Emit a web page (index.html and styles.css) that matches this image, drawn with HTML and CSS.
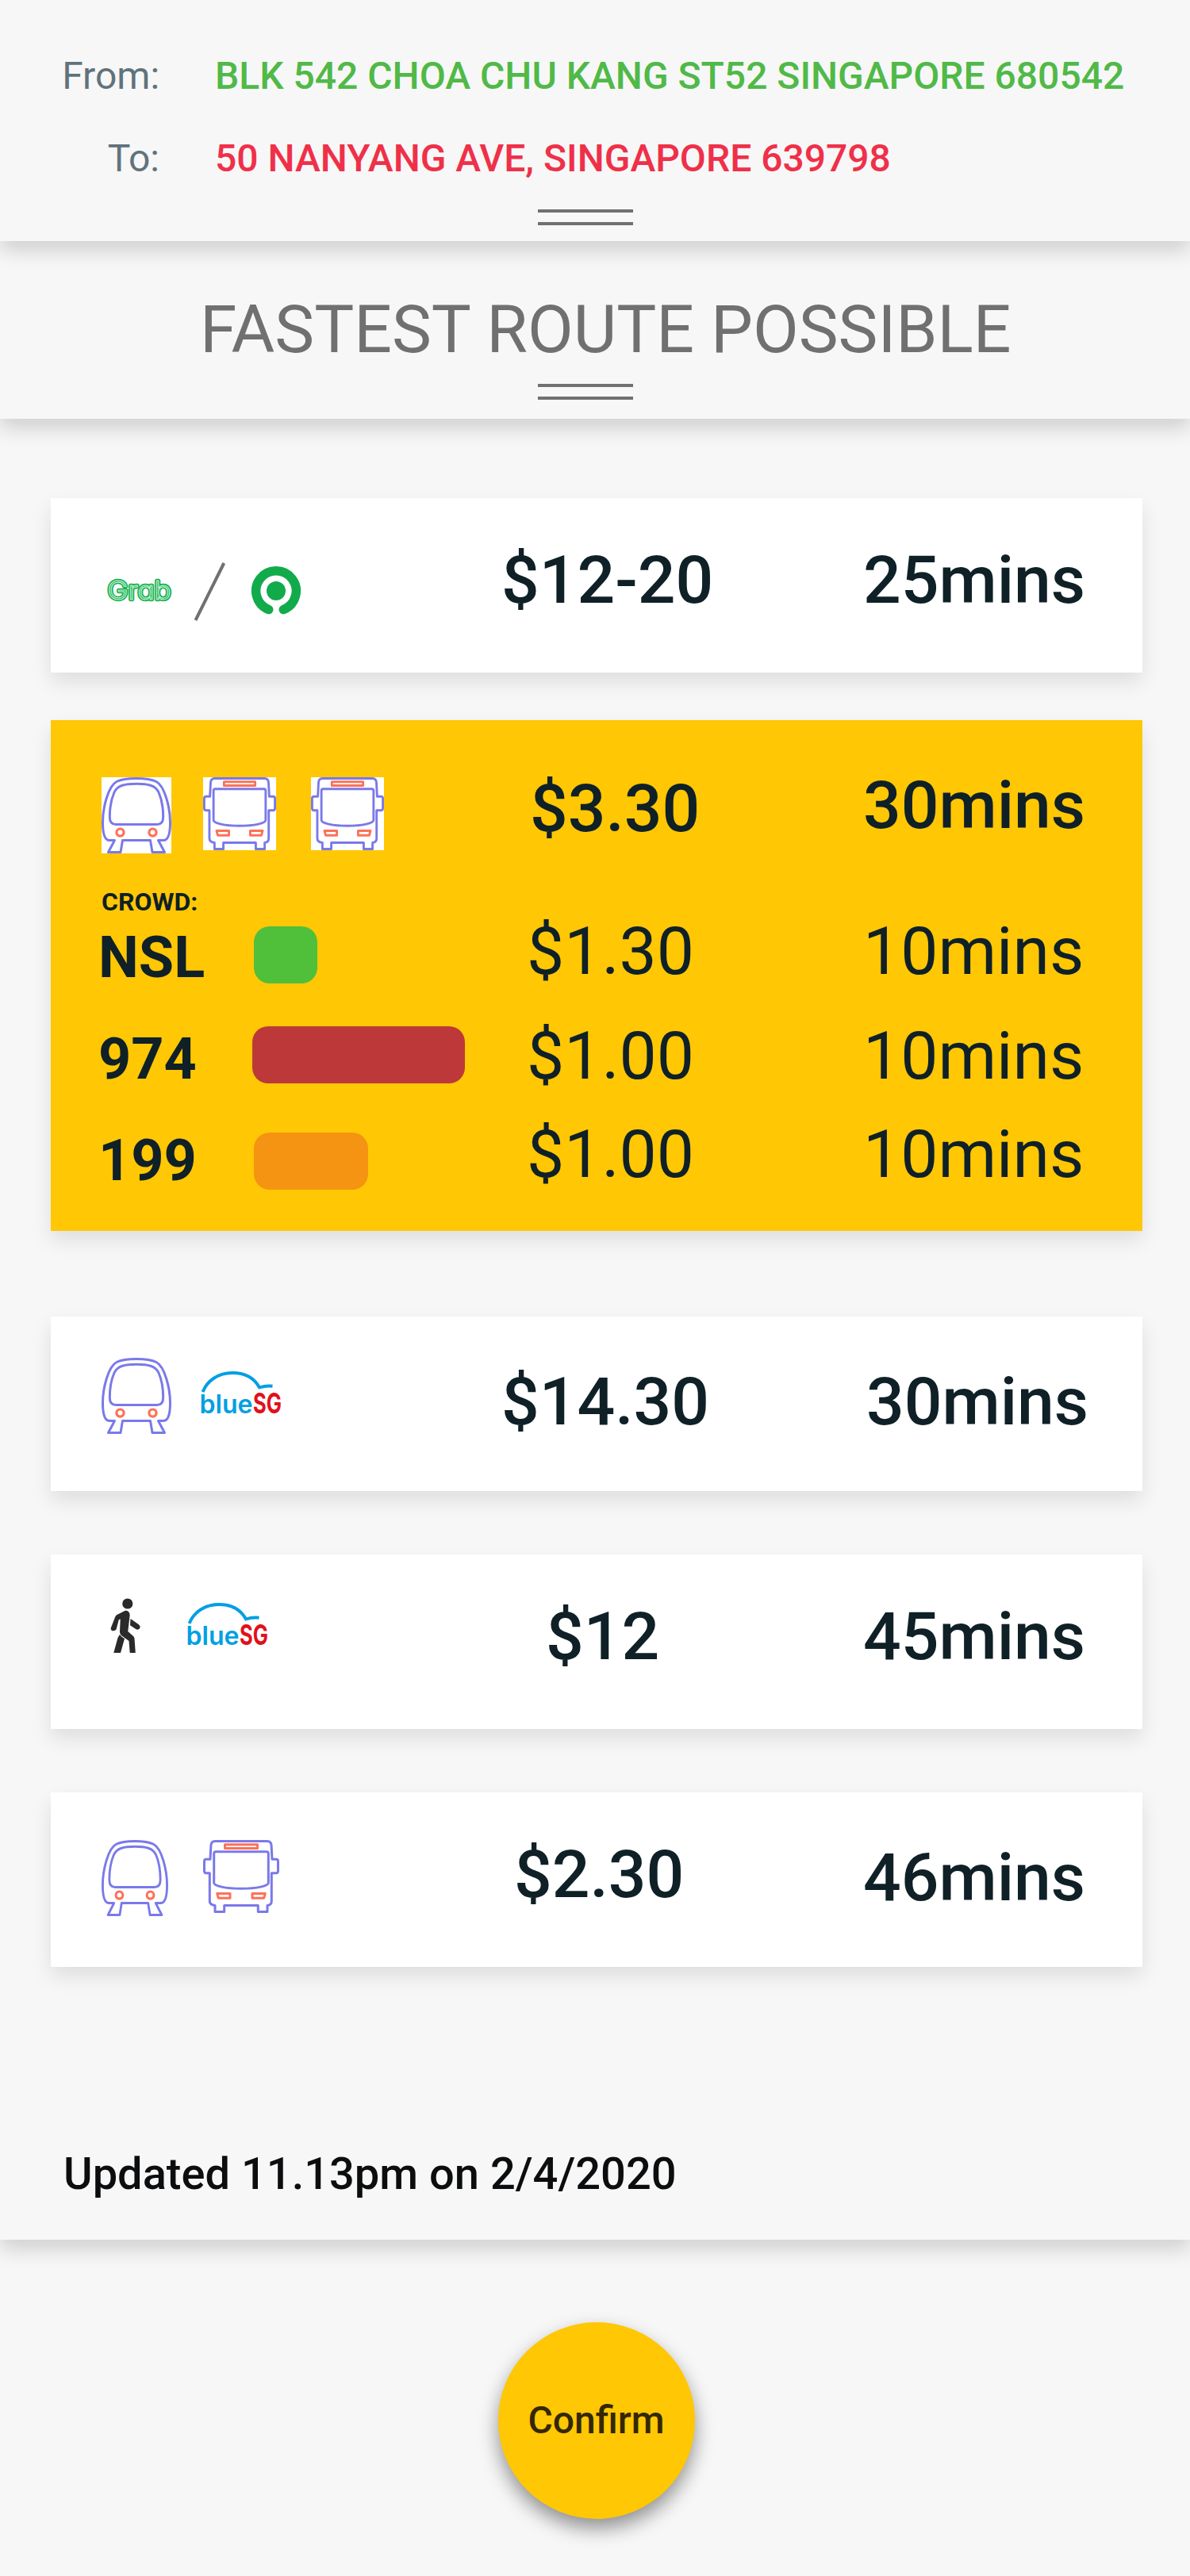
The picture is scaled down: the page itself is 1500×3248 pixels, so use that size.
FILE: index.html
```html
<!DOCTYPE html>
<html lang="en">
<head>
<meta charset="utf-8">
<title>Fastest route possible</title>
<link rel="stylesheet" href="styles.css">
</head>
<body>
<svg class="sprite" aria-hidden="true">
  <symbol id="train" viewBox="0 0 88 96" preserveAspectRatio="none">
    <g fill="none" stroke="#7a79ea" stroke-width="3" stroke-linejoin="round">
      <path d="M44 1.500C35 1.500 25 2.500 19 5.500C8.500 11 1.500 38 1.500 57C1.500 70 4 79.500 10 79.500H16.500L8.500 94.500H24L26.500 79.500H61.500L64 94.500H79.500L71.500 79.500H78C84 79.500 86.500 70 86.500 57C86.500 38 79.500 11 69 5.500C63 2.500 53 1.500 44 1.500Z"/>
      <path d="M44 8.200C30 8.200 20 10 16 19C12 28 10.300 41 10.300 50C10.300 56 13 59.500 18 59.500H70C75 59.500 77.700 56 77.700 50C77.700 41 76 28 72 19C68 10 58 8.200 44 8.200Z"/>
    </g>
    <g fill="none" stroke="#ff7058" stroke-width="3.200">
      <circle cx="23.500" cy="69.600" r="4.600"/><circle cx="64.500" cy="69.600" r="4.600"/>
    </g>
  </symbol>
  <symbol id="bus" viewBox="0 0 96 92" preserveAspectRatio="none">
    <g fill="none" stroke="#7a79ea" stroke-width="3" stroke-linejoin="round">
      <path d="M9 24.300L9.900 7C10.200 3 12 1.500 15 1.500H81C84 1.500 85.800 3 86.100 7L87 24.300H92Q94.500 24.300 94.500 27V39Q94.500 41.700 92 41.700H86.300V77C86.300 80 84.500 82.200 81 82.500V90.500H69.300V82.500H26.700V90.500H15V82.500C11 82 8.300 80 8.300 77V41.700H4Q1.500 41.700 1.500 39V27Q1.500 24.300 4 24.300Z"/>
      <path d="M16 14.700H80Q82.300 14.700 82.300 17V54C82.300 58 68 61.300 48 61.300S13.700 58 13.700 54V17Q13.700 14.700 16 14.700Z"/>
    </g>
    <g fill="none" stroke="#ff7058" stroke-width="3" stroke-linejoin="round">
      <rect x="27.500" y="5.800" width="41" height="4.800"/>
      <path d="M17.700 67.500H34V73.200H19.300ZM78.300 67.500H62V73.200H76.700Z"/>
    </g>
  </symbol>
  <symbol id="bluesg" viewBox="0 0 102 54">
    <path d="M2.600 26C8 12 22 2 40 2C57 2 68 9.500 74 20.500C80 18.600 84 18.100 90.500 18.800" fill="none" stroke="#009fe3" stroke-width="3.900"/>
    <text class="bluesg-blue" x="-1.500" y="52.800" textLength="67" lengthAdjust="spacingAndGlyphs">blue</text>
    <text class="bluesg-sg" x="66" y="53" textLength="36" lengthAdjust="spacingAndGlyphs">SG</text>
  </symbol>
</svg>

<header class="trip">
  <div class="trip-row"><span class="trip-label">From:</span><span class="trip-value trip-value--from">BLK 542 CHOA CHU KANG ST52 SINGAPORE 680542</span></div>
  <div class="trip-row"><span class="trip-label">To:</span><span class="trip-value trip-value--to">50 NANYANG AVE, SINGAPORE 639798</span></div>
  <div class="handle"></div>
</header>

<section class="heading">
  <h1 class="title">FASTEST ROUTE POSSIBLE</h1>
  <div class="handle"></div>
</section>

<main class="routes">
  <article class="card card--ride">
    <div class="icons icons--ride">
      <svg class="icon-grab" viewBox="0 0 88 48">
        <text class="grab" x="3.500" y="33.700" textLength="80" lengthAdjust="spacingAndGlyphs">Grab</text>
        <text class="grab grab--inline" aria-hidden="true" x="3.500" y="33.700" textLength="80" lengthAdjust="spacingAndGlyphs">Grab</text>
      </svg>
      <svg class="icon-slash" viewBox="0 0 44 80"><path d="M4.500 76L40.300 4" stroke="#707070" stroke-width="4"/></svg>
      <svg class="icon-gojek" viewBox="0 0 64 64">
        <circle cx="32" cy="31" r="12" fill="#11ab4b"/>
        <path d="M22.700 54.600A25.300 25.300 0 1 1 41.300 54.600" fill="none" stroke="#11ab4b" stroke-width="11.500" stroke-linecap="round"/>
      </svg>
    </div>
    <div class="price">$12-20</div>
    <div class="time">25mins</div>
  </article>

  <article class="card card--selected">
    <div class="summary">
      <div class="icons">
        <svg class="icon-train boxed"><use href="#train"/></svg>
        <svg class="icon-bus boxed"><use href="#bus"/></svg>
        <svg class="icon-bus icon-bus--second boxed"><use href="#bus"/></svg>
      </div>
      <div class="price">$3.30</div>
      <div class="time">30mins</div>
    </div>
    <div class="crowd">CROWD:</div>
    <div class="leg leg--nsl"><div class="line">NSL</div><div class="load load--low"></div><div class="fare">$1.30</div><div class="time">10mins</div></div>
    <div class="leg leg--974"><div class="line">974</div><div class="load load--high"></div><div class="fare">$1.00</div><div class="time">10mins</div></div>
    <div class="leg leg--199"><div class="line">199</div><div class="load load--medium"></div><div class="fare">$1.00</div><div class="time">10mins</div></div>
  </article>

  <article class="card card--train-car">
    <div class="icons">
      <svg class="icon-train"><use href="#train"/></svg>
      <svg class="icon-bluesg"><use href="#bluesg"/></svg>
    </div>
    <div class="price">$14.30</div>
    <div class="time">30mins</div>
  </article>

  <article class="card card--walk-car">
    <div class="icons">
      <svg class="icon-walk" viewBox="0 0 38 69" fill="#2a2a2a">
        <circle cx="21.800" cy="7" r="6.600"/>
        <path d="M19 15.700L8.500 21C7 22 6 23.500 5.500 25.500L.8 37.500C.3 39.500 1.500 41.300 3.700 41.300S7.300 40.300 7.800 38.500L10.800 27.300L12.700 26.500L12 42C12 45 13 46 14.500 47.500L23.500 54L24.700 69H31.800L30.600 52.500C30.500 50 30 49 29 48L22.300 42L24.600 22C24.800 18 22.500 15.300 19 15.700Z"/>
        <path d="M25.500 26L35.800 33.200C37.700 34.700 38 36.300 37.200 38C36.300 39.700 34.300 40 32.500 39.300L25 34.300ZM12 45.700C13 48 15.500 49.500 18 51L13 69H4.300L9.500 50Z"/>
      </svg>
      <svg class="icon-bluesg"><use href="#bluesg"/></svg>
    </div>
    <div class="price">$12</div>
    <div class="time">45mins</div>
  </article>

  <article class="card card--train-bus">
    <div class="icons">
      <svg class="icon-train"><use href="#train"/></svg>
      <svg class="icon-bus"><use href="#bus"/></svg>
    </div>
    <div class="price">$2.30</div>
    <div class="time">46mins</div>
  </article>

  <p class="updated">Updated 11.13pm on 2/4/2020</p>
</main>

<footer class="actions">
  <button class="confirm" type="button">Confirm</button>
</footer>
</body>
</html>
```
FILE: styles.css
```css
* {
  box-sizing: border-box;
}

body {
  margin: 0;
  background: #f7f7f7;
  color: #0f2027;
  font-family: Roboto, "Liberation Sans", sans-serif;
}

.sprite {
  display: none;
}

/* Stacked sheets, each casting a shadow on the one below */
.trip,
.heading,
.routes {
  position: relative;
  background: #f7f7f7;
  box-shadow: 0 12px 24px rgba(0, 0, 0, 0.16);
}

.trip {
  z-index: 3;
  height: 304px;
  padding-top: 67px;
}

.trip-row {
  display: flex;
  margin-bottom: 47px;
  font-size: 48px;
  line-height: 57px;
  white-space: nowrap;
}

.trip-row + .trip-row {
  margin-bottom: 36px;
}

.trip-label {
  width: 201px;
  margin-right: 70px;
  color: #60737c;
  text-align: right;
}

.trip-value {
  font-weight: 500;
}

.trip-value--from {
  color: #50b948;
}

.trip-value--to {
  color: #ef3049;
}

.handle {
  width: 120px;
  height: 20px;
  margin-left: 678px;
  border: solid #707070;
  border-width: 4px 0;
}

.heading {
  z-index: 2;
  height: 224px;
  padding-top: 62px;
}

.title {
  margin: 0 0 19px 252px;
  color: #707070;
  font-size: 84px;
  font-weight: 400;
  line-height: 99px;
  white-space: nowrap;
}

.routes {
  z-index: 1;
  height: 2296px;
  padding: 100px 60px 0 64px;
}

.card {
  display: grid;
  grid-template-columns: 568px 456px 1fr;
  align-items: start;
  height: 220px;
  background: #fff;
  box-shadow: 0 12px 24px rgba(0, 0, 0, 0.1);
}

.price,
.time,
.fare {
  padding-top: 54px;
  font-size: 84px;
  font-weight: 500;
  line-height: 99px;
}

.icons {
  display: flex;
  align-items: flex-start;
  padding-left: 64px;
}

.icons svg {
  flex: none;
  display: block;
}

.boxed {
  background: #fff;
}

.icon-train {
  width: 88px;
  height: 96px;
}

.icon-bus {
  width: 92px;
  height: 92px;
  margin-left: 40px;
}

.icon-bus--second {
  margin-left: 44px;
}

.icon-bluesg {
  width: 102px;
  height: 54px;
}

.bluesg-blue {
  fill: #009fe3;
  font: 600 32px Inter, sans-serif;
}

.bluesg-sg {
  fill: #e2101b;
  font: 700 35px Inter, sans-serif;
}

/* Ride hailing */
.icons--ride {
  align-items: center;
  padding: 78px 0 0 68px;
}

.icon-grab {
  width: 88px;
  height: 48px;
}

/* Wordmark drawn as a heavy outline with a pale line running inside it */
.grab {
  fill: #12b24e;
  stroke: #12b24e;
  stroke-width: 4.4;
  stroke-linejoin: round;
  font: 300 32px Inter, sans-serif;
  font-feature-settings: "cv11";
}

.grab--inline {
  fill: #12b24e;
  stroke: #c4ecd2;
  stroke-width: 1.1;
}

.icon-slash {
  width: 44px;
  height: 80px;
  margin-left: 22px;
}

.icon-gojek {
  width: 64px;
  height: 64px;
  margin-left: 30px;
}

/* Selected route with its legs */
.card--selected {
  display: block;
  height: 644px;
  margin: 60px 0 108px;
  background: #ffc704;
}

.summary {
  display: grid;
  grid-template-columns: 604px 420px 1fr;
  height: 216px;
}

.summary .icons {
  padding-top: 72px;
}

.summary .price {
  padding-top: 62px;
}

.summary .time {
  padding-top: 58px;
}

.crowd {
  padding-left: 64px;
  font-size: 32px;
  font-weight: 700;
  line-height: 26px;
}

.leg {
  display: grid;
  grid-template-columns: 194px 346px 424px 1fr;
  align-items: start;
  padding-left: 60px;
}

.leg .fare,
.leg .time {
  padding-top: 0;
  font-weight: 400;
}

.leg--nsl {
  height: 132px;
}

.leg--974 {
  height: 124px;
}

.line {
  padding-top: 15px;
  font-size: 72px;
  font-weight: 700;
  line-height: 85px;
}

.leg--974 .line {
  padding-top: 11px;
}

.load {
  height: 72px;
  border-radius: 20px;
}

.load--low {
  width: 80px;
  margin: 18px 0 0 2px;
  background: #50bf3a;
}

.load--high {
  width: 268px;
  margin-top: 12px;
  background: #bd3839;
}

.load--medium {
  width: 144px;
  margin: 22px 0 0 2px;
  background: #f59312;
}

/* Train, then shared car */
.card--train-car .icons {
  padding-top: 52px;
}

.card--train-car .icon-bluesg {
  margin: 17px 0 0 37px;
}

.card--train-car .price {
  padding-top: 58px;
}

.card--train-car .time {
  padding: 58px 0 0 4px;
}

/* Walk, then shared car */
.card--walk-car {
  grid-template-columns: 624px 400px 1fr;
  margin-top: 80px;
}

.card--walk-car .icons {
  padding: 55px 0 0 75px;
}

.icon-walk {
  width: 38px;
  height: 69px;
}

.card--walk-car .icon-bluesg {
  margin: 6px 0 0 59px;
}

/* Train, then bus */
.card--train-bus {
  grid-template-columns: 584px 440px 1fr;
  margin-top: 80px;
}

.card--train-bus .icons {
  padding-top: 60px;
}

.card--train-bus .icon-train {
  width: 84px;
}

.card--train-bus .icon-bus {
  width: 96px;
  margin-left: 44px;
}

.card--train-bus .time {
  padding-top: 58px;
}

.updated {
  margin: 228px 0 0 16px;
  color: #0c0d0e;
  font-size: 56px;
  font-weight: 500;
  line-height: 66px;
}

.actions {
  display: flex;
  justify-content: center;
  height: 424px;
  padding: 104px 0 0 4px;
}

.confirm {
  width: 248px;
  height: 248px;
  padding: 0 1px 2px 0;
  border: 0;
  border-radius: 50%;
  background: #ffc704;
  box-shadow: 0 12px 24px rgba(0, 0, 0, 0.42);
  color: #332801;
  font: 500 48px/57px Roboto, sans-serif;
}
```
